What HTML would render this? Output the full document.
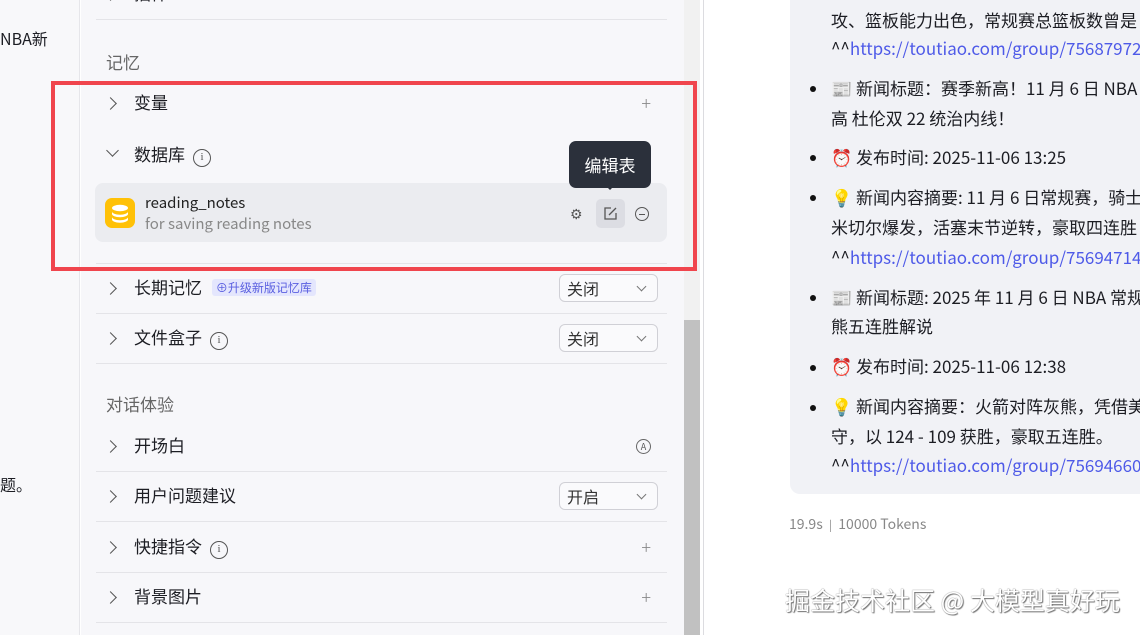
<!DOCTYPE html>
<html><head><meta charset="utf-8"><style>
*{margin:0;padding:0;box-sizing:border-box}
body{width:1140px;height:635px;overflow:hidden;position:relative;background:#fff;font-family:"Noto Sans CJK SC","Liberation Sans",sans-serif;color:#1c1d23}
.abs{position:absolute}
.left{left:0;top:0;width:80px;height:635px;background:#f8f8fa;border-right:1px solid #e6e6ea}
.mid{left:81px;top:0;width:603px;height:635px;background:#f7f7fa}
.sb{left:684px;top:0;width:16px;height:635px;background:#f1f1f1}
.thumb{left:684px;top:320px;width:16px;height:315px;background:#c1c1c1}
.rb{left:703px;top:0;width:1px;height:635px;background:#dcdce0}
.row{position:absolute;left:96px;width:571px;height:50px;border-bottom:1px solid #e4e4e8}
.row .chev{position:absolute;left:10px;top:20px;width:9px;height:9px;border-right:1.5px solid #555;border-top:1.5px solid #555;transform:rotate(45deg)}
.row .t{position:absolute;left:38px;top:11px;font-size:17px;color:#1c1d23;line-height:24px}
.plus{position:absolute;right:16px;top:13px;font-size:18px;color:#888;font-weight:300;line-height:22px}
.sel{position:absolute;right:9px;top:10px;width:99px;height:28px;border:1px solid #d0d0d6;border-radius:6px;background:#fafafc;font-size:16px;padding:1px 7px;color:#333;line-height:24px}
.sel:after{content:"";position:absolute;right:12px;top:8px;width:6px;height:6px;border-right:1.2px solid #777;border-bottom:1.2px solid #777;transform:rotate(45deg)}
.info{display:inline-block;width:18px;height:18px;border:1.5px solid #555;border-radius:50%;font-size:11px;text-align:center;line-height:15px;color:#555;font-family:"Liberation Serif",serif;vertical-align:1px;margin-left:8px}
.sec{position:absolute;left:106px;font-size:16px;color:#666;line-height:24px}
.chat{left:790px;top:-20px;width:370px;height:514px;background:#f1f2f6;border-radius:10px}
.ln{position:absolute;left:831px;font-size:17px;color:#1c1d23;white-space:nowrap;line-height:24px}
.dot{position:absolute;left:810px;width:6px;height:6px;border-radius:50%;background:#111}
a{color:#4e5ae8;text-decoration:none}
</style></head><body>
<div class="abs left"></div>
<div class="abs" style="left:0;top:26px;font-size:16px">NBA新</div>
<div class="abs" style="left:0;top:472px;font-size:16px">题。</div>
<div class="abs mid"></div>
<div class="abs sb"></div><div class="abs thumb"></div>
<div class="abs rb"></div>

<div class="row" style="top:-30px"><div class="chev"></div><div class="t">插件</div><div class="plus">+</div></div>
<div class="sec" style="top:50px;font-size:17px">记忆</div>
<div class="row" style="top:79px;border:none"><div class="chev"></div><div class="t">变量</div><div class="plus">+</div></div>
<div class="abs" style="left:108px;top:146px;width:9px;height:9px;border-right:1.5px solid #555;border-bottom:1.5px solid #555;transform:rotate(45deg)"></div>
<div class="abs" style="left:134px;top:142px;font-size:17px;line-height:24px">数据库<span class="info">i</span></div>
<div class="abs" style="left:95px;top:183px;width:572px;height:59px;background:#ebecf0;border-radius:8px"></div>
<div class="abs" style="left:105px;top:198px;width:30px;height:30px;background:#ffc107;border-radius:7px">
<svg width="30" height="30" viewBox="0 0 30 30"><g fill="#fff"><ellipse cx="15" cy="10" rx="8" ry="3.2"/><path d="M7 13.5c0 1.8 3.6 3.2 8 3.2s8-1.4 8-3.2v2.5c0 1.8-3.6 3.2-8 3.2s-8-1.4-8-3.2z"/><path d="M7 19c0 1.8 3.6 3.2 8 3.2s8-1.4 8-3.2v2.5c0 1.8-3.6 3.2-8 3.2s-8-1.4-8-3.2z"/></g></svg></div>
<div class="abs" style="left:145px;top:192px;font-size:15px;color:#222;line-height:22px">reading_notes</div>
<div class="abs" style="left:145px;top:213px;font-size:15px;color:#888;line-height:22px">for saving reading notes</div>
<div class="abs" style="left:570px;top:204px;font-size:14px;color:#555">⚙</div>
<div class="abs" style="left:596px;top:199px;width:29px;height:29px;background:#dcdde3;border-radius:5px"><svg width="29" height="29" viewBox="0 0 29 29" fill="none" stroke="#555" stroke-width="1.3"><path d="M15 9H9v11h11v-6"/><path d="M13 16l7-7"/></svg></div>
<div class="abs" style="left:635px;top:207px;width:14px;height:14px;border:1.3px solid #555;border-radius:50%"><div style="position:absolute;left:3px;top:5.5px;width:6px;border-top:1.3px solid #555"></div></div>
<div class="abs" style="left:569px;top:141px;width:82px;height:47px;background:#2b303b;border-radius:7px;color:#fff;font-size:17px;text-align:center;line-height:47px">编辑表</div>
<div class="abs" style="left:604px;top:184px;width:0;height:0;border:6px solid transparent;border-top-color:#2b303b"></div>
<div class="abs" style="left:51px;top:81px;width:646px;height:190px;border:4px solid #f0454d"></div>
<div class="abs" style="left:96px;top:263px;width:571px;border-top:1px solid #e4e4e8"></div>

<div class="row" style="top:264px"><div class="chev"></div><div class="t">长期记忆 <span style="font-size:12px;background:#e4e6fd;color:#5a5fe0;padding:0 4px;border-radius:3px;margin-left:6px;vertical-align:2px">⊕升级新版记忆库</span></div><div class="sel">关闭</div></div>
<div class="row" style="top:314px"><div class="chev"></div><div class="t">文件盒子<span class="info">i</span></div><div class="sel">关闭</div></div>
<div class="sec" style="top:392px;font-size:17px">对话体验</div>
<div class="row" style="top:422px"><div class="chev"></div><div class="t">开场白</div><div class="abs" style="right:16px;top:17px;width:15px;height:15px;border:1.3px solid #666;border-radius:50%;font-size:9px;text-align:center;line-height:13px;color:#555">A</div></div>
<div class="row" style="top:472px"><div class="chev"></div><div class="t">用户问题建议</div><div class="sel">开启</div></div>
<div class="row" style="top:523px"><div class="chev"></div><div class="t">快捷指令<span class="info">i</span></div><div class="plus">+</div></div>
<div class="row" style="top:573px"><div class="chev"></div><div class="t">背景图片</div><div class="plus">+</div></div>

<div class="abs chat"></div>
<div class="ln" style="top:8px">攻、篮板能力出色，常规赛总篮板数曾是</div>
<div class="ln" style="top:36px">^^<a>https://toutiao.com/group/75687972</a></div>
<div class="dot" style="top:86px"></div><div class="ln" style="top:76px">📰 新闻标题：赛季新高！11 月 6 日 NBA</div>
<div class="ln" style="top:106px">高 杜伦双 22 统治内线！</div>
<div class="dot" style="top:155px"></div><div class="ln" style="top:145px">⏰ 发布时间: 2025-11-06 13:25</div>
<div class="dot" style="top:195px"></div><div class="ln" style="top:185px">💡 新闻内容摘要: 11 月 6 日常规赛，骑士</div>
<div class="ln" style="top:215px">米切尔爆发，活塞末节逆转，豪取四连胜</div>
<div class="ln" style="top:245px">^^<a>https://toutiao.com/group/75694714</a></div>
<div class="dot" style="top:295px"></div><div class="ln" style="top:285px">📰 新闻标题: 2025 年 11 月 6 日 NBA 常规</div>
<div class="ln" style="top:314px">熊五连胜解说</div>
<div class="dot" style="top:365px"></div><div class="ln" style="top:354px">⏰ 发布时间: 2025-11-06 12:38</div>
<div class="dot" style="top:405px"></div><div class="ln" style="top:394px">💡 新闻内容摘要：火箭对阵灰熊，凭借美</div>
<div class="ln" style="top:424px">守，以 124 - 109 获胜，豪取五连胜。</div>
<div class="ln" style="top:453px">^^<a>https://toutiao.com/group/75694660</a></div>
<div class="abs" style="left:789px;top:514px;font-size:14px;color:#888">19.9s &nbsp;<span style="font-size:11px">|</span>&nbsp; 10000 Tokens</div>
<div class="abs" style="left:785px;top:583px;font-size:25px;color:#fff;text-shadow:0 0 1px #555,1px 1px 1px #777;white-space:nowrap;line-height:34px">掘金技术社区 @ 大模型真好玩</div>
</body></html>
